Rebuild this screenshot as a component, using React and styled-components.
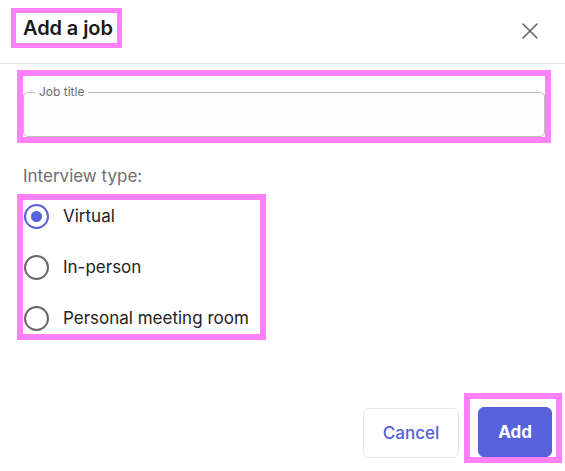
import React, { useState } from 'react';
import styled, { createGlobalStyle } from 'styled-components';
import { X } from 'lucide-react';

const GlobalStyle = createGlobalStyle`
  html, body {
    margin: 0;
    padding: 0;
    background: #fff;
  }
  body {
    font-family: Inter, "Noto Sans", "Liberation Sans", sans-serif;
    color: #1f1f1f;
  }
  * {
    box-sizing: border-box;
  }
`;

const HIGHLIGHT = '#ff80f7';

const Dialog = styled.div`
  width: 565px;
  height: 471px;
  display: flex;
  flex-direction: column;
  background: #fff;
`;

const Header = styled.header`
  height: 64px;
  flex-shrink: 0;
  display: flex;
  align-items: flex-start;
  justify-content: space-between;
  padding: 8px 21px 0 11px;
  border-bottom: 1px solid #dfe1ef;
`;

const Highlight = styled.div`
  border: ${(p) => p.$border || 6}px solid ${HIGHLIGHT};
  padding: ${(p) => p.$pad || '0'};
  width: ${(p) => p.$width || 'auto'};
`;

const Title = styled.h2`
  margin: 0;
  font-size: 20px;
  line-height: 26px;
  font-weight: 600;
  color: #1a1a1a;
  letter-spacing: -0.1px;
`;

const CloseButton = styled.button`
  border: 0;
  background: none;
  padding: 0;
  margin-top: 9px;
  width: 28px;
  height: 28px;
  display: flex;
  align-items: center;
  justify-content: center;
  color: #666;
  cursor: pointer;
`;

const Body = styled.div`
  flex: 1;
  display: flex;
  flex-direction: column;
  padding: 6px 14px 0 17px;
`;

const Fieldset = styled.fieldset`
  margin: 0;
  padding: 0 11px;
  border: 1px solid #bdbdbd;
  border-radius: 5px;
  background: #fdfdfd;
`;

const Legend = styled.legend`
  padding: 0 4px;
  font-size: 12px;
  line-height: 14px;
  color: #6a6a6a;
`;

const TextInput = styled.input`
  display: block;
  width: 100%;
  height: 37px;
  border: 0;
  outline: none;
  background: transparent;
  font: inherit;
  font-size: 16px;
`;

const GroupLabel = styled.div`
  margin: 23px 0 8px 6px;
  font-size: 17px;
  line-height: 20px;
  color: #6e6e6e;
`;

const RadioList = styled.div`
  padding: 0;
  display: flex;
  flex-direction: column;
  gap: 19px;
`;

const RadioRow = styled.label`
  height: 32px;
  display: flex;
  align-items: center;
  gap: 14px;
  padding: 0 11px 0 1px;
  font-size: 17px;
  color: #222;
  cursor: pointer;
`;

const RadioCircle = styled.span`
  width: 25px;
  height: 25px;
  border-radius: 50%;
  border: 2.5px solid ${(p) => (p.$checked ? '#5561d8' : '#666')};
  display: flex;
  align-items: center;
  justify-content: center;
  flex-shrink: 0;

  &::after {
    content: '';
    width: 11px;
    height: 11px;
    border-radius: 50%;
    background: #5561d8;
    display: ${(p) => (p.$checked ? 'block' : 'none')};
  }
`;

const Footer = styled.footer`
  margin-top: auto;
  display: flex;
  justify-content: flex-end;
  align-items: flex-end;
  gap: 5px;
  padding: 0 3px 8px 0;
`;

const Button = styled.button`
  height: 50px;
  padding: 0 19px;
  border-radius: 6px;
  border: 1px solid ${(p) => (p.$primary ? '#5662db' : '#e6e7ee')};
  background: ${(p) => (p.$primary ? '#5662db' : '#fff')};
  color: ${(p) => (p.$primary ? '#fff' : '#5561d8')};
  font-family: inherit;
  font-size: 17px;
  font-weight: ${(p) => (p.$primary ? 700 : 500)};
  margin-bottom: ${(p) => (p.$primary ? 0 : 5)}px;
  cursor: pointer;
`;

const options = ['Virtual', 'In-person', 'Personal meeting room'];

export default function App() {
  const [type, setType] = useState('Virtual');

  return (
    <>
      <GlobalStyle />
      <Dialog>
        <Header>
          <Highlight $border={5} $pad="2px 4px 2px 7px">
            <Title>Add a job</Title>
          </Highlight>
          <CloseButton aria-label="Close">
            <X size={28} strokeWidth={1.4} />
          </CloseButton>
        </Header>
        <Body>
          <Highlight $pad="9px 0 0 0">
            <Fieldset>
              <Legend>Job title</Legend>
              <TextInput />
            </Fieldset>
          </Highlight>
          <GroupLabel>Interview type:</GroupLabel>
          <Highlight $width="fit-content" $pad="0">
            <RadioList>
              {options.map((o) => (
                <RadioRow key={o} onClick={() => setType(o)}>
                  <RadioCircle $checked={type === o} />
                  {o}
                </RadioRow>
              ))}
            </RadioList>
          </Highlight>
        </Body>
        <Footer>
          <Button>Cancel</Button>
          <Highlight $pad="8px 4px 0 8px">
            <Button $primary>Add</Button>
          </Highlight>
        </Footer>
      </Dialog>
    </>
  );
}
